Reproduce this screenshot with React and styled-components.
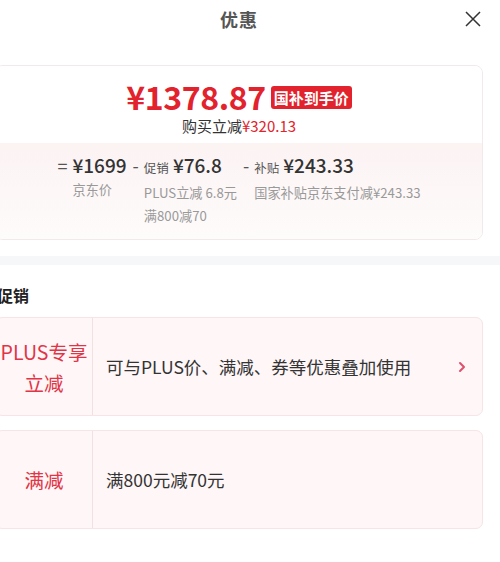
import styled, {createGlobalStyle} from "styled-components";

const Global = createGlobalStyle`
  html, body {
    margin: 0;
    padding: 0;
    background: #fff;
    overflow: hidden;
  }
  body {
    font-family: "Noto Sans CJK SC", "Noto Sans", sans-serif;
    color: #333;
  }
`

const Sheet = styled.div`
  width: 522px;
  margin-left: -22px;
`

const Header = styled.div`
  display: grid;
  grid-template-columns: 1fr auto 1fr;
  align-items: center;
  height: 38px;
`

const Title = styled.div`
  grid-column: 2;
  font-size: 18px;
  line-height: 24px;
  font-weight: 700;
  color: #555;
  letter-spacing: 1px;
`

const Close = styled.button`
  justify-self: end;
  margin-right: 17px;
  width: 20px;
  height: 20px;
  padding: 0;
  border: none;
  background: none;
  display: flex;
  align-items: center;
  justify-content: center;
`

const Body = styled.div`
  padding: 27px 17px 0;
`

const PriceCard = styled.div`
  border: 1px solid #f0eaea;
  border-radius: 8px;
  overflow: hidden;
`

const Top = styled.div`
  display: flex;
  flex-direction: column;
  align-items: center;
  padding: 11px 0 6px;
  background: #fff;
`

const PriceLine = styled.div`
  display: flex;
  align-items: center;
  height: 38px;
`

const Price = styled.span`
  font-size: 32px;
  line-height: 38px;
  font-weight: 700;
  color: #e2232d;
  letter-spacing: -0.4px;
`

const Tag = styled.span`
  margin-left: 5px;
  margin-top: 3px;
  background: #e2232d;
  color: #fff;
  font-size: 15px;
  font-weight: 700;
  line-height: 23px;
  padding: 0 3px;
  border-radius: 3px;
`

const Saved = styled.div`
  font-size: 15px;
  line-height: 22px;
  color: #333;

  em {
    font-style: normal;
    color: #e2232d;
  }
`

const Breakdown = styled.div`
  display: flex;
  justify-content: center;
  gap: 6px;
  padding: 9px 0 12px;
  background: linear-gradient(#fcf3f3, #fefbfb);
`

const Term = styled.div`
  display: flex;
  gap: 5px;
`

const Op = styled.span`
  font-size: 18px;
  line-height: 26px;
  color: #555;
`

const TermBody = styled.div`
  display: flex;
  flex-direction: column;
`

const Amount = styled.div`
  display: flex;
  align-items: baseline;
  gap: 4px;
  font-size: 19px;
  line-height: 26px;
  font-weight: 500;
  color: #333;

  small {
    font-size: 12.5px;
    font-weight: 400;
    color: #555;
  }
`

const Desc = styled.div`
  font-size: 13.2px;
  line-height: 23px;
  color: #999;
`

const Band = styled.div`
  height: 9px;
  margin: 16px -17px 0;
  background: #f6f7f9;
`

const Heading = styled.div`
  margin: 19px 0 11px;
  padding-left: 2px;
  font-size: 16px;
  line-height: 22px;
  font-weight: 700;
  color: #222;
`

const Promos = styled.div`
  display: flex;
  flex-direction: column;
  gap: 14px;
`

const Promo = styled.div`
  display: flex;
  height: 99px;
  box-sizing: border-box;
  border: 1px solid #f6e4e6;
  border-radius: 7px;
  background: #fef6f7;
`

const PromoType = styled.div`
  width: 96px;
  flex: none;
  display: flex;
  align-items: center;
  justify-content: center;
  text-align: center;
  border-right: 1px solid #f3e0e3;
  color: #e13446;
  font-size: 19.5px;
  line-height: 31px;
`

const PromoText = styled.div`
  flex: 1;
  display: flex;
  align-items: center;
  padding-left: 13px;
  font-size: 17.5px;
  color: #333;
`

const Chevron = styled.div`
  display: flex;
  align-items: center;
  padding-right: 16px;
`

const terms = [
    {op: '=', label: '', amount: '¥1699', desc: ['京东价']},
    {op: '-', label: '促销', amount: '¥76.8', desc: ['PLUS立减 6.8元', '满800减70']},
    {op: '-', label: '补贴', amount: '¥243.33', desc: ['国家补贴京东支付减¥243.33']},
]

const promos = [
    {type: ['PLUS专享', '立减'], text: '可与PLUS价、满减、券等优惠叠加使用', more: true},
    {type: ['满减'], text: '满800元减70元', more: false},
]

const App = () => {
    return (
        <Sheet>
            <Global/>
            <Header>
                <Title>优惠</Title>
                <Close aria-label="关闭">
                    <svg width="16" height="16" viewBox="0 0 16 16">
                        <path d="M1 1 L15 15 M15 1 L1 15" stroke="#333" strokeWidth="1.5" fill="none"/>
                    </svg>
                </Close>
            </Header>
            <Body>
                <PriceCard>
                    <Top>
                        <PriceLine>
                            <Price>¥1378.87</Price>
                            <Tag>国补到手价</Tag>
                        </PriceLine>
                        <Saved>购买立减<em>¥320.13</em></Saved>
                    </Top>
                    <Breakdown>
                        {terms.map((t, i) => (
                            <Term key={i}>
                                <Op>{t.op}</Op>
                                <TermBody>
                                    <Amount>
                                        {t.label && <small>{t.label}</small>}
                                        {t.amount}
                                    </Amount>
                                    {t.desc.map((d, j) => <Desc key={j}>{d}</Desc>)}
                                </TermBody>
                            </Term>
                        ))}
                    </Breakdown>
                </PriceCard>
                <Band/>
                <Heading>促销</Heading>
                <Promos>
                    {promos.map((p, i) => (
                        <Promo key={i}>
                            <PromoType>
                                <div>{p.type.map((l, j) => <div key={j}>{l}</div>)}</div>
                            </PromoType>
                            <PromoText>{p.text}</PromoText>
                            {p.more && (
                                <Chevron>
                                    <svg width="8" height="12" viewBox="0 0 8 12">
                                        <path d="M2 2 L6 6 L2 10" stroke="#e0506a" strokeWidth="2" fill="none"
                                              strokeLinecap="round" strokeLinejoin="round"/>
                                    </svg>
                                </Chevron>
                            )}
                        </Promo>
                    ))}
                </Promos>
            </Body>
        </Sheet>
    )
}

export default App;
